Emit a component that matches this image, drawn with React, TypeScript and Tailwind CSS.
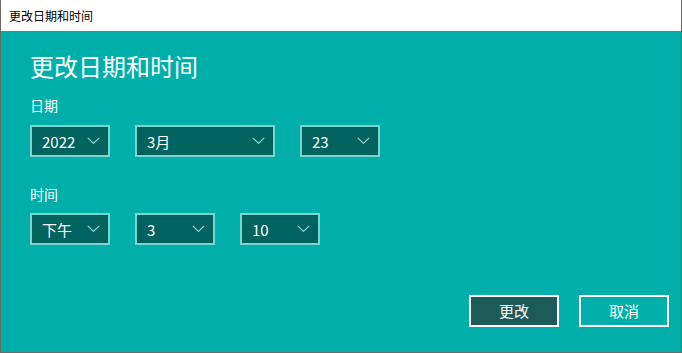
import React from 'react';

const font = { fontFamily: '"Noto Sans CJK SC", "Noto Sans", sans-serif' };

const Chevron: React.FC = () => (
  <svg width="13" height="8" viewBox="0 0 13 8" fill="none" className="shrink-0">
    <path d="M0.8 0.8 L6.5 6.5 L12.2 0.8" stroke="#8ed3cf" strokeWidth="1.2" />
  </svg>
);

const Select: React.FC<{ value: string; width: string }> = ({ value, width }) => (
  <div
    className={`${width} h-[32px] flex items-center justify-between pl-[10px] pr-[8px] bg-[#00635f] border-2 border-[#7dd3cf] text-white text-[15px]`}
  >
    <span className="leading-none">{value}</span>
    <Chevron />
  </div>
);

const App: React.FC = () => {
  return (
    <div className="w-[682px] h-[353px] flex flex-col bg-[#6b6b6b] pl-px pr-px pb-px" style={font}>
      {/* Title bar */}
      <div className="h-[31px] bg-white flex items-center pl-[8px] text-[12px] text-black shrink-0">
        更改日期和时间
      </div>

      {/* Body */}
      <div className="flex-1 bg-[#00afaa] flex flex-col px-[29px] text-white">
        <h1 className="text-[24px] leading-none mt-[23px]">更改日期和时间</h1>

        <div className="text-[14px] leading-none mt-[20px]">日期</div>
        <div className="flex gap-[25px] mt-[13px]">
          <Select value="2022" width="w-[80px]" />
          <Select value="3月" width="w-[140px]" />
          <Select value="23" width="w-[80px]" />
        </div>

        <div className="text-[14px] leading-none mt-[30px]">时间</div>
        <div className="flex gap-[25px] mt-[12px]">
          <Select value="下午" width="w-[80px]" />
          <Select value="3" width="w-[80px]" />
          <Select value="10" width="w-[80px]" />
        </div>

        <div className="flex justify-end gap-[20px] mt-[50px] mr-[-17px]">
          <button className="w-[90px] h-[32px] border-2 border-white bg-[#1d5b58] text-[15px] text-white">更改</button>
          <button className="w-[90px] h-[32px] border-2 border-white bg-[#00afaa] text-[15px] text-white">取消</button>
        </div>
      </div>
    </div>
  );
};

export default App;
